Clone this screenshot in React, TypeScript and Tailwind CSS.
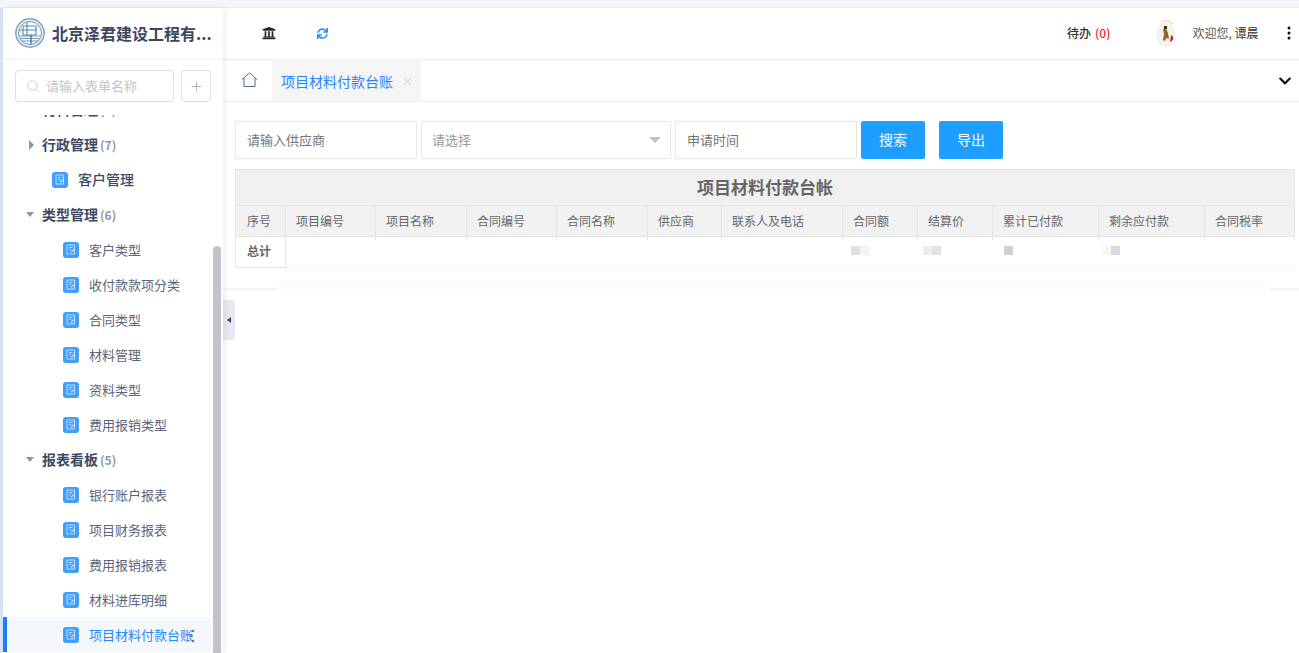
import { FaUniversity, FaSync, FaChevronDown } from "react-icons/fa";
import { Search, Plus, X } from "lucide-react";

const font = { fontFamily: '"Noto Sans CJK SC", "Noto Sans", sans-serif' };

function DocIcon() {
  return (
    <span className="flex h-4 w-4 shrink-0 items-center justify-center rounded-[3px] bg-[#409eff]">
      <svg width="10" height="11" viewBox="0 0 10 11" fill="none" stroke="#c4dfff" strokeWidth="1">
        <path d="M1 1h7.5v9H1z" />
        <path d="M3 3.5h3.5M3 5.5h2" />
        <path d="M5 8.2 8.8 5" strokeWidth="1.3" />
      </svg>
    </span>
  );
}

function Group({ name, count, open }: { name: string; count: number; open: boolean }) {
  return (
    <div className="flex h-[35px] items-center">
      <span className="flex w-[39px] shrink-0 justify-end pr-[8px]">
        {open ? (
          <span className="h-0 w-0 border-x-[4.5px] border-t-[5px] border-x-transparent border-t-[#8d95a8]" />
        ) : (
          <span className="h-0 w-0 border-y-[5px] border-l-[5px] border-y-transparent border-l-[#8d95a8]" />
        )}
      </span>
      <span className="text-[14px] font-semibold text-[#3d4a66]">{name}</span>
      <span className="ml-[2px] text-[12px] font-semibold text-[#8f97aa]">({count})</span>
    </div>
  );
}

function Leaf({ name, active }: { name: string; active?: boolean }) {
  return (
    <div
      className={
        active
          ? "flex h-[35px] items-center border-l-[4px] border-[#1a7dff] bg-[#f4f7fc] pl-[56px]"
          : "flex h-[35px] items-center pl-[60px]"
      }
    >
      <DocIcon />
      <span className={active ? "ml-[10px] text-[13px] text-[#1e88ff]" : "ml-[10px] text-[13px] text-[#5b6478]"}>{name}</span>
    </div>
  );
}

const cols = [
  ["序号", 50, 11],
  ["项目编号", 90, 10],
  ["项目名称", 91, 10],
  ["合同编号", 90, 10],
  ["合同名称", 91, 10],
  ["供应商", 74, 10],
  ["联系人及电话", 121, 10],
  ["合同额", 75, 10],
  ["结算价", 75, 10],
  ["累计已付款", 106, 10],
  ["剩余应付款", 106, 10],
  ["合同税率", 90, 10],
] as const;

const blurs: Record<number, string[]> = {
  7: ["bg-[#e3dfdc]", "bg-[#f0f4f8]"],
  8: ["bg-[#efecea]", "bg-[#e2e2e5]"],
  9: ["bg-[#d0d0d2]"],
  10: ["bg-[#fbf5f0]", "bg-[#d8dae0]"],
};
const blurPad: Record<number, string> = { 7: "pl-[8px]", 8: "pl-[5px]", 9: "pl-[11px]", 10: "pl-[3px]" };

export default function App() {
  return (
    <div style={font} className="relative flex h-[653px] w-[1299px] flex-col overflow-hidden bg-white">
      <div className="h-2 shrink-0 border-b border-[#e8ebf2] bg-[#f3f5fa]" />
      <div className="flex min-h-0 flex-1 bg-[#d8e3f3]">
        {/* sidebar */}
        <aside className="relative z-10 ml-[3px] flex w-[220px] shrink-0 flex-col bg-white shadow-[2px_0_6px_rgba(0,0,0,0.07)]">
          <div className="flex h-[50px] shrink-0 items-center pl-[12px]">
            <svg width="30" height="30" viewBox="0 0 30 30" fill="none" className="shrink-0">
              <circle cx="15" cy="15" r="14.2" fill="#e6edf2" stroke="#7fa3ba" strokeWidth="1.4" />
              <circle cx="15" cy="15" r="11.5" fill="#fbfcfd" stroke="#6f97b2" strokeWidth="1" />
              <path d="M8 8h13v9H8zM12 4v14M4 12h18" stroke="#5f89a6" strokeWidth="1.1" />
              <path d="M5 18h20M5.5 20.5h19M7 23h16" stroke="#6f97b2" strokeWidth="1.1" />
              <path d="M16 17v9" stroke="#46708e" strokeWidth="1.3" />
            </svg>
            <span className="ml-[7px] whitespace-nowrap text-[16px] font-semibold leading-none text-[#3b4760]">北京泽君建设工程有...</span>
          </div>
          <div className="h-[2px] shrink-0 bg-[#f5f6f8]" />
          <div className="flex shrink-0 items-center pl-[12px] pt-[10px]">
            <div className="flex h-[32px] w-[159px] items-center rounded-[4px] border border-[#dcdfe6] pb-[1px] pl-[10px]">
              <Search size={14} strokeWidth={1.4} className="text-[#c0c4cc]" />
              <span className="ml-[6px] text-[13px] text-[#c0c4cc]">请输入表单名称</span>
            </div>
            <div className="ml-[7px] flex h-[32px] w-[30px] items-center justify-center rounded-[4px] border border-[#dcdfe6]">
              <Plus size={15} strokeWidth={1.3} className="text-[#9aa0ab]" />
            </div>
          </div>
          <div className="mt-[13px] min-h-0 flex-1 overflow-hidden pr-[12px]">
            <div className="mt-[-23px]">
              <Group name="材料管理" count={7} open={false} />
              <Group name="行政管理" count={7} open={false} />
              <div className="flex h-[35px] items-center pl-[49px]">
                <DocIcon />
                <span className="ml-[10px] text-[14px] font-medium text-[#3d4a66]">客户管理</span>
              </div>
              <Group name="类型管理" count={6} open />
              {["客户类型", "收付款款项分类", "合同类型", "材料管理", "资料类型", "费用报销类型"].map((n) => (
                <Leaf key={n} name={n} />
              ))}
              <Group name="报表看板" count={5} open />
              {["银行账户报表", "项目财务报表", "费用报销报表", "材料进库明细"].map((n) => (
                <Leaf key={n} name={n} />
              ))}
              <Leaf name="项目材料付款台账" active />
            </div>
          </div>
          {/* scrollbar */}
          <div className="absolute bottom-0 right-[2px] top-[238px] w-[8px] rounded-t-[4px] bg-[#c1c5cb]" />
          <div className="absolute bottom-[10px] left-[187px] h-[14px] w-[5px]">
            <svg width="5" height="14" viewBox="0 0 5 14" fill="#6b7386">
              <circle cx="3" cy="2" r="1.3" /><circle cx="1.5" cy="7" r="1.3" /><circle cx="3" cy="12" r="1.3" />
            </svg>
          </div>
        </aside>

        {/* main */}
        <main className="relative flex min-w-0 flex-1 flex-col bg-white">
          <header className="flex h-[50px] shrink-0 items-center text-[12px]">
            <FaUniversity size={14} className="ml-[39px] text-[#23272f]" />
            <FaSync size={11} className="ml-[41px] text-[#1e88ff]" />
            <span className="ml-[739px] font-medium text-[#333]">待办</span>
            <span className="ml-[4px] font-medium text-[#f5222d]">(0)</span>
            <svg width="24" height="30" viewBox="0 0 24 30" className="ml-[44px] shrink-0">
              <ellipse cx="12" cy="16" rx="9.5" ry="13" fill="#f5f2ee" />
              <path d="M7 4 Q13 0 20 6" stroke="#d9d9d9" fill="none" />
              <path d="M9 11l3-1 2 5 1 6-3-1-1 3-2-1 1-6z" fill="#8a6a2a" />
              <path d="M10 8h3v3h-3z" fill="#3a3026" />
              <path d="M17 17q3 1 2 5l-3 2z" fill="#b3342c" />
            </svg>
            <span className="ml-[14px] text-[#555]">欢迎您, <span className="text-[#333]">谭晨</span></span>
            <svg width="4" height="14" viewBox="0 0 4 14" fill="#111" className="ml-[29px]">
              <circle cx="2" cy="2" r="1.5" /><circle cx="2" cy="7" r="1.5" /><circle cx="2" cy="12" r="1.5" />
            </svg>
          </header>
          <div className="h-[3px] shrink-0 bg-[#f5f5f6]" />
          <div className="flex h-[41px] shrink-0 items-stretch border-b border-[#eeeeee]">
            <div className="flex w-[49px] items-start pl-[18px] pt-[11px]">
              <svg width="17" height="15" viewBox="0 0 17 15" fill="none" stroke="#5a6c80" strokeWidth="1">
                <path d="M0.7 7.8 8.5 0.8l7.8 7" />
                <path d="M3 6v8.5h11V6" />
              </svg>
            </div>
            <div className="flex w-[149px] items-center bg-[#f5f5f6] pl-[9px]">
              <span className="text-[14px] text-[#1e88ff]">项目材料付款台账</span>
              <X size={13} strokeWidth={1.3} className="ml-[8px] text-[#bcc0c6]" />
            </div>
            <div className="flex flex-1 items-center justify-end pr-[7px]">
              <FaChevronDown size={14} className="text-[#10151f]" />
            </div>
          </div>

          <div className="flex flex-col border-b-2 border-[#f2f2f2] pb-[20px] pl-[12px] pt-[19px]">
            <div className="flex h-[38px] items-stretch text-[13px]">
              <div className="flex w-[182px] items-center rounded-[2px] border border-[#e6e6e6] pl-[11px] text-[#757575]">请输入供应商</div>
              <div className="ml-[4px] flex w-[250px] items-center justify-between rounded-[2px] border border-[#e6e6e6] pl-[10px] pr-[9px] text-[#999]">
                <span>请选择</span>
                <span className="h-0 w-0 border-x-[6px] border-t-[6px] border-x-transparent border-t-[#c2c2c2]" />
              </div>
              <div className="ml-[4px] flex w-[182px] items-center rounded-[2px] border border-[#e6e6e6] pl-[11px] text-[#757575]">申请时间</div>
              <div className="ml-[4px] flex w-[64px] items-center justify-center rounded-[2px] bg-[#1e9fff] pb-[1px] text-[14px] text-white">搜索</div>
              <div className="ml-[14px] flex w-[64px] items-center justify-center rounded-[2px] bg-[#1e9fff] pb-[1px] text-[14px] text-white">导出</div>
            </div>
            <table className="mt-[10px] w-[1059px] table-fixed border-collapse text-[12px] text-[#666]">
              <colgroup>
                {cols.map(([n, w]) => (
                  <col key={n} style={{ width: w }} />
                ))}
              </colgroup>
              <thead>
                <tr className="h-[36px] bg-[#f0f0f0]">
                  <th colSpan={12} className="border border-[#e6e6e6] pb-[1px] text-center text-[17px] font-bold text-[#666]">项目材料付款台帐</th>
                </tr>
                <tr className="h-[31px] bg-[#f2f2f2]">
                  {cols.map(([n, , p]) => (
                    <th key={n} style={{ paddingLeft: p }} className="border border-[#e6e6e6] pb-[1px] text-left font-normal">{n}</th>
                  ))}
                </tr>
              </thead>
              <tbody>
                <tr className="h-[31px]">
                  <td className="border border-[#e6e6e6] pb-[3px] pl-[11px] font-bold">总计</td>
                  {cols.slice(1).map(([n], i) => (
                    <td key={n} className={"relative pt-[9px] align-top " + (blurPad[i + 1] ?? "")}>
                      <span className="absolute right-0 top-0 h-[3px] w-px bg-[#e6e6e6]" />
                      <div className="flex">
                        {(blurs[i + 1] ?? []).map((c) => (
                          <span key={c} className={"h-[9px] w-[9px] " + c} />
                        ))}
                      </div>
                    </td>
                  ))}
                </tr>
              </tbody>
            </table>
          </div>
          {/* redaction smudges */}
          <div className="absolute left-[63px] right-[5px] top-[256px] h-[8px] bg-[#fbfbfb]" />
          <div className="absolute left-[55px] right-[29px] top-[274px] h-[8px] bg-[#fbfbfb]" />

          {/* collapse handle */}
          <div className="absolute left-0 top-[292px] flex h-[40px] w-[12px] items-center justify-center rounded-r-[3px] bg-[#e6e9f0]">
            <span className="h-0 w-0 border-y-[3.5px] border-r-[4px] border-y-transparent border-r-[#3a4556]" />
          </div>
        </main>
      </div>
    </div>
  );
}
